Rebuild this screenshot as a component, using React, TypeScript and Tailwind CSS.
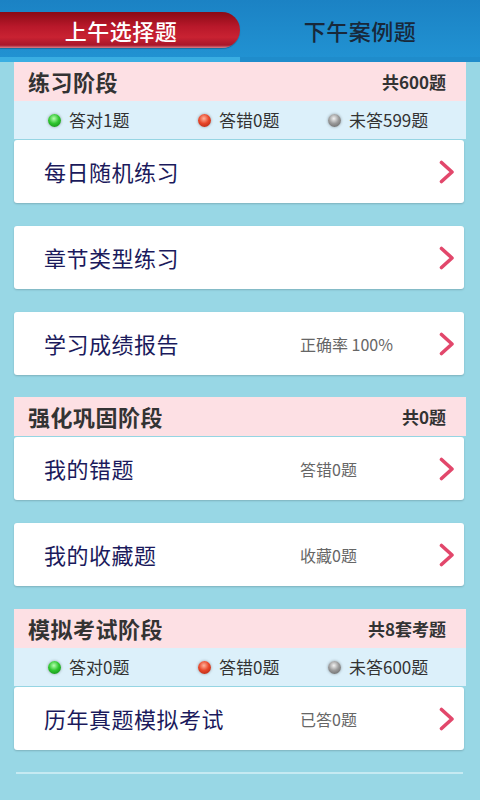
import React from "react";

const font = { fontFamily: '"Noto Sans CJK SC", "Noto Sans", sans-serif' };

function Dot({ kind }: { kind: "g" | "r" | "k" }) {
  const cls =
    kind === "g"
      ? "bg-[radial-gradient(circle_at_45%_35%,#b6ffb0_0%,#2fc62f_45%,#0b7d10_100%)]"
      : kind === "r"
      ? "bg-[radial-gradient(circle_at_45%_35%,#ffb39c_0%,#e8472a_45%,#a3200e_100%)]"
      : "bg-[radial-gradient(circle_at_45%_35%,#f2f2f2_0%,#9a9a9a_45%,#5a5a5a_100%)]";
  return <span className={`inline-block w-[13px] h-[13px] rounded-full shadow-[0_0_3px_rgba(0,0,0,0.35)] ${cls}`} />;
}

function Stats({ a, b, c }: { a: string; b: string; c: string }) {
  return (
    <div className="h-[38px] bg-[#dcf0fa] flex items-center pl-[34px] text-[17px] text-[#333]">
      <div className="w-[150px] flex items-center gap-[8px]">
        <Dot kind="g" />
        <span>{a}</span>
      </div>
      <div className="w-[130px] flex items-center gap-[8px]">
        <Dot kind="r" />
        <span>{b}</span>
      </div>
      <div className="flex items-center gap-[8px]">
        <Dot kind="k" />
        <span>{c}</span>
      </div>
    </div>
  );
}

function SectionHeader({ title, total, mt }: { title: string; total: string; mt: string }) {
  return (
    <div className={`${mt} mx-[14px] h-[39px] bg-[#fde0e4] flex items-center justify-between pl-[14px] pr-[20px]`}>
      <span className="text-[22px] font-bold text-[#333] tracking-[0.5px]">{title}</span>
      <span className="text-[17px] font-bold text-[#333]">{total}</span>
    </div>
  );
}

function Chevron() {
  return (
    <svg width="16" height="24" viewBox="0 0 16 24" className="shrink-0">
      <path d="M2.5 2.5 L13 12 L2.5 21.5" fill="none" stroke="#e2476b" strokeWidth="3.6" strokeLinecap="round" strokeLinejoin="round" />
    </svg>
  );
}

function Card({ title, sub, mt }: { title: string; sub?: string; mt: string }) {
  return (
    <div className={`${mt} ml-[14px] mr-[16px] h-[63px] bg-white rounded-[3px] shadow-[0_1px_2px_rgba(0,0,0,0.18)] flex items-center pl-[30px] pr-[9px]`}>
      <span className="w-[256px] text-[22px] text-[#1b1a5c] tracking-[0.5px]">{title}</span>
      <span className="flex-1 text-[16px] text-[#666]">{sub}</span>
      <Chevron />
    </div>
  );
}

export default function App() {
  return (
    <div className="w-[480px] h-[800px] bg-[#98d7e5] overflow-hidden" style={font}>
      <div className="h-[57px] bg-[linear-gradient(to_bottom,#1b82c4,#2192d2)] flex items-center">
        <div className="w-[240px] h-[36px] mt-[3px] rounded-r-[18px] bg-[linear-gradient(to_bottom,#8a0a16_0%,#b8182a_40%,#c92232_70%,#a8162a_92%,#d9828c_100%)] flex items-center justify-center shadow-[0_1px_1px_rgba(0,0,0,0.25)]">
          <span className="text-white text-[22px] font-medium tracking-[0.5px] pl-[2px]">上午选择题</span>
        </div>
        <div className="flex-1 flex items-center justify-center mt-[3px]">
          <span className="text-[#18283a] text-[22px] font-medium tracking-[0.5px]">下午案例题</span>
        </div>
      </div>
      <div className="h-[5px] flex">
        <div className="w-[240px] bg-[#3aaee2]" />
        <div className="flex-1 bg-[#1f8ccb]" />
      </div>

      <SectionHeader title="练习阶段" total="共600题" mt="mt-0" />
      <div className="mx-[14px]">
        <Stats a="答对1题" b="答错0题" c="未答599题" />
      </div>
      <Card title="每日随机练习" mt="mt-[1px]" />
      <Card title="章节类型练习" mt="mt-[23px]" />
      <Card title="学习成绩报告" sub="正确率 100%" mt="mt-[23px]" />

      <SectionHeader title="强化巩固阶段" total="共0题" mt="mt-[22px]" />
      <Card title="我的错题" sub="答错0题" mt="mt-[1px]" />
      <Card title="我的收藏题" sub="收藏0题" mt="mt-[23px]" />

      <SectionHeader title="模拟考试阶段" total="共8套考题" mt="mt-[23px]" />
      <div className="mx-[14px]">
        <Stats a="答对0题" b="答错0题" c="未答600题" />
      </div>
      <Card title="历年真题模拟考试" sub="已答0题" mt="mt-[1px]" />

      <div className="mt-[22px] ml-[16px] mr-[17px] h-[2px] bg-[#c6eaf2]" />
    </div>
  );
}
